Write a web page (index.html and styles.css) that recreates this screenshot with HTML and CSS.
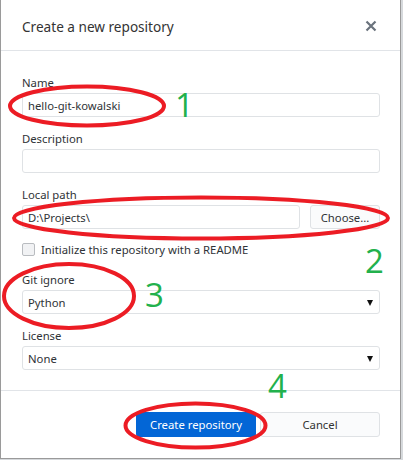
FILE: index.html
```html
<!DOCTYPE html>
<html>
<head>
<meta charset="utf-8">
<link rel="stylesheet" href="styles.css">
</head>
<body>
<div class="dialog">
  <div class="header">
    <span class="title">Create a new repository</span>
    <svg class="close" width="12" height="12" viewBox="0 0 12 12"><path d="M1.5 1.5 L10.5 10.5 M10.5 1.5 L1.5 10.5" stroke="#6a737d" stroke-width="2.2" fill="none"/></svg>
  </div>
  <div class="form">
    <div class="field">
      <div class="label">Name</div>
      <div class="input">hello-git-kowalski</div>
    </div>
    <div class="field">
      <div class="label">Description</div>
      <div class="input"></div>
    </div>
    <div class="field">
      <div class="label">Local path</div>
      <div class="path-row">
        <div class="input grow">D:\Projects\</div>
        <div class="btn choose">Choose...</div>
      </div>
    </div>
    <div class="check-row">
      <span class="checkbox"></span>
      <span class="check-label">Initialize this repository with a README</span>
    </div>
    <div class="field">
      <div class="label">Git ignore</div>
      <div class="input select">Python<span class="arrow"></span></div>
    </div>
    <div class="field">
      <div class="label">License</div>
      <div class="input select">None<span class="arrow"></span></div>
    </div>
  </div>
  <div class="footer">
    <div class="btn primary">Create repository</div>
    <div class="btn cancel">Cancel</div>
  </div>
  <svg class="marks" width="403" height="460" viewBox="0 0 403 460">
    <g fill="none" stroke="#ec1c24" stroke-width="4">
      <ellipse cx="87" cy="106" rx="77" ry="19.5"/>
      <ellipse cx="201" cy="218" rx="187" ry="20.5"/>
      <ellipse cx="69" cy="296" rx="65" ry="32"/>
      <ellipse cx="195.5" cy="425.5" rx="70" ry="22"/>
    </g>
    <g fill="#22b14c" font-family="'Open Sans', sans-serif" font-size="33">
      <text x="175" y="117">1</text>
      <text x="365" y="273">2</text>
      <text x="145" y="307">3</text>
      <text x="268" y="398">4</text>
    </g>
  </svg>
</div>
</body>
</html>
```

FILE: styles.css
```css
html, body {
  margin: 0;
  padding: 0;
}
body {
  width: 403px;
  height: 460px;
  background: #d6d9dc;
  font-family: "Noto Sans", "Open Sans", sans-serif;
  font-size: 11.3px;
  color: #2f3337;
  overflow: hidden;
}
.dialog {
  position: relative;
  width: 399px;
  height: 458px;
  background: #fff;
  border-left: 1px solid #9a9a9a;
  border-right: 1px solid #9a9a9a;
  border-bottom: 1px solid #9a9a9a;
  display: flex;
  flex-direction: column;
}
.header {
  height: 51px;
  border-bottom: 1px solid #e1e4e8;
  display: flex;
  align-items: center;
  justify-content: space-between;
  padding: 2px 21px 0 21px;
  box-sizing: border-box;
}
.title {
  font-size: 13.6px;
  color: #333;
}
.close {
  display: block;
  margin-right: 2px;
}
.form {
  padding: 22px 20px 20px 21px;
  display: flex;
  flex-direction: column;
  gap: 12px;
  border-bottom: 1px solid #e1e4e8;
}
.field {
  display: flex;
  flex-direction: column;
  gap: 4px;
}
.label {
  line-height: 19px;
  height: 16px;
}
.input {
  height: 24px;
  box-sizing: border-box;
  border: 1px solid #dfe2e5;
  border-radius: 3px;
  padding: 0 5px;
  line-height: 23px;
  background: #fff;
  position: relative;
}
.path-row {
  display: flex;
  gap: 10px;
}
.grow {
  flex: 1;
}
.btn {
  height: 24px;
  box-sizing: border-box;
  border: 1px solid #dfe2e5;
  border-radius: 3px;
  background: #fafbfc;
  display: flex;
  align-items: center;
  justify-content: center;
}
.choose {
  width: 70px;
}
.check-row {
  display: flex;
  align-items: center;
  height: 16px;
  gap: 6px;
  margin-bottom: 1px;
}
.checkbox {
  width: 13px;
  height: 13px;
  box-sizing: border-box;
  border: 1px solid #b9bcc0;
  border-radius: 2px;
  background: #f1f2f4;
  margin-left: 0;
}
.check-label {
  line-height: 16px;
  padding-top: 1px;
}
.select .arrow {
  position: absolute;
  right: 6px;
  top: 9px;
  width: 0;
  height: 0;
  border-left: 3.5px solid transparent;
  border-right: 3.5px solid transparent;
  border-top: 6px solid #111;
}
.footer {
  display: flex;
  justify-content: flex-end;
  gap: 4px;
  padding: 21px 20px 0 0;
}
.footer .btn {
  width: 120px;
  height: 25px;
}
.primary {
  background: #0366d6;
  border-color: #0366d6;
  color: #fff;
}
.cancel {
  color: #333;
}
.marks {
  position: absolute;
  left: -1px;
  top: 0;
  pointer-events: none;
}
```
